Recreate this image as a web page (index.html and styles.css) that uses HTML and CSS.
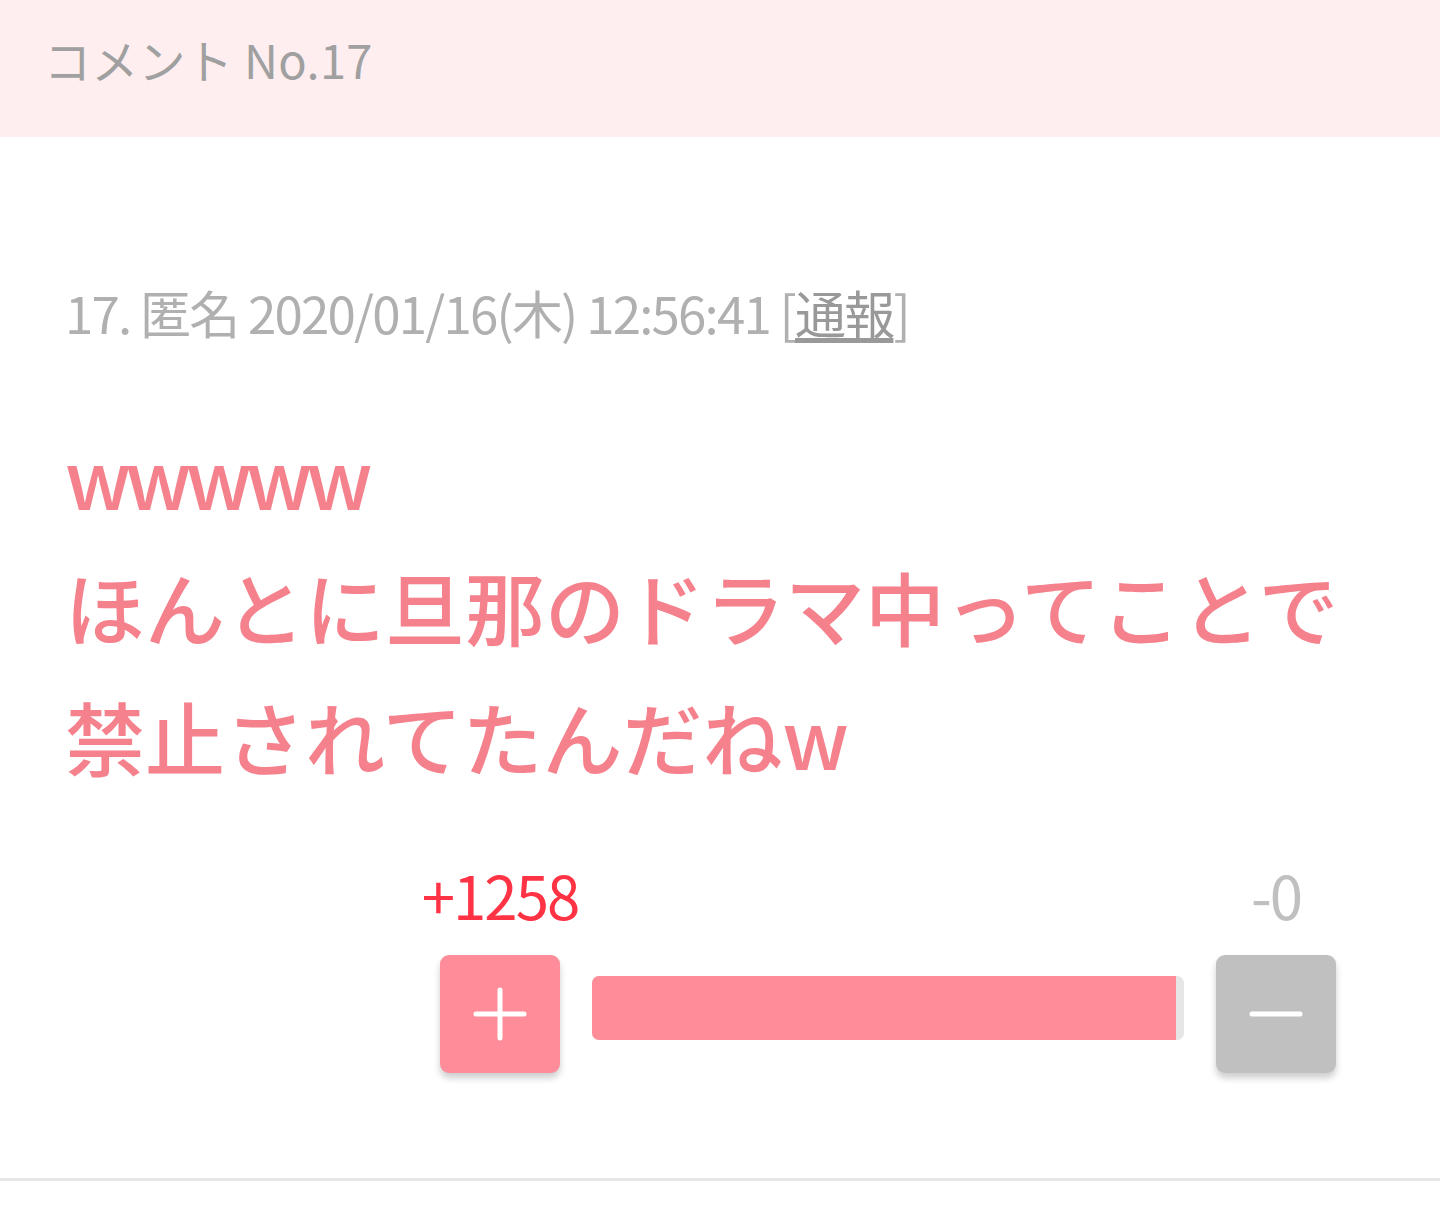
FILE: index.html
```html
<!DOCTYPE html>
<html lang="ja">
<head>
<meta charset="utf-8">
<title>コメント No.17</title>
<link rel="stylesheet" href="styles.css">
</head>
<body>
<header class="head">コメント No.17</header>
<article class="comment">
  <div class="meta">17. 匿名 2020/01/16(木) 12:56:41 [<a class="report" href="#">通報</a>]</div>
  <div class="body"><span class="laugh">wwwww</span><br>ほんとに旦那のドラマ中ってことで<br>禁止されてたんだねw</div>
  <div class="vote">
    <div class="vote-col">
      <div class="count plus-count">+1258</div>
      <button class="btn btn-plus" aria-label="plus">
        <svg width="56" height="56" viewBox="0 0 56 56"><path d="M28 4v48M4 28h48" stroke="#fff" stroke-width="5" stroke-linecap="round" fill="none"/></svg>
      </button>
    </div>
    <div class="bar"><div class="bar-fill" style="width:98.65%"></div></div>
    <div class="vote-col">
      <div class="count minus-count">-0</div>
      <button class="btn btn-minus" aria-label="minus">
        <svg width="56" height="56" viewBox="0 0 56 56"><path d="M4 28h48" stroke="#fff" stroke-width="5" stroke-linecap="round" fill="none"/></svg>
      </button>
    </div>
  </div>
</article>
</body>
</html>
```
FILE: styles.css
```css
html, body {
  margin: 0;
  padding: 0;
  background: #fff;
}
body {
  font-family: "Noto Sans CJK JP", "Noto Sans", sans-serif;
}
.head {
  background: #ffeef0;
  height: 137px;
  line-height: 118px;
  padding-left: 44px;
  font-size: 47px;
  letter-spacing: 0.3px;
  color: #a0a0a0;
  box-sizing: border-box;
}
.comment {
  padding: 145px 65px 105px;
  border-bottom: 3px solid #e6e6e6;
}
.meta {
  font-size: 51px;
  line-height: 60px;
  color: #b0b0b0;
  letter-spacing: -1.8px;
}
.report {
  color: #999;
  text-decoration: underline;
  text-underline-offset: 4px;
}
.body {
  margin-top: 68px;
  font-size: 80px;
  font-weight: 500;
  line-height: 130px;
  color: #f4818c;
}
.laugh {
  letter-spacing: -6px;
}
.vote {
  margin-top: 59px;
  margin-left: 375px;
  width: 896px;
  display: flex;
  align-items: flex-end;
  gap: 32px;
}
.vote-col {
  width: 120px;
  display: flex;
  flex-direction: column;
  align-items: center;
  gap: 26px;
}
.count {
  font-size: 60px;
  line-height: 70px;
  letter-spacing: -2px;
  white-space: nowrap;
}
.plus-count { color: #ff3344; }
.minus-count { color: #c0c0c0; }
.btn {
  width: 120px;
  height: 118px;
  border: none;
  border-radius: 9px;
  padding: 0;
  display: flex;
  align-items: center;
  justify-content: center;
  box-shadow: 0 5px 7px rgba(0, 0, 0, 0.2);
}
.btn-plus { background: #ff8c99; }
.btn-minus { background: #c0c0c0; }
.bar {
  flex: 1;
  height: 64px;
  margin-bottom: 33px;
  background: #e6e6e6;
  border-radius: 7px;
  overflow: hidden;
}
.bar-fill {
  height: 100%;
  background: #ff8c99;
}
```
